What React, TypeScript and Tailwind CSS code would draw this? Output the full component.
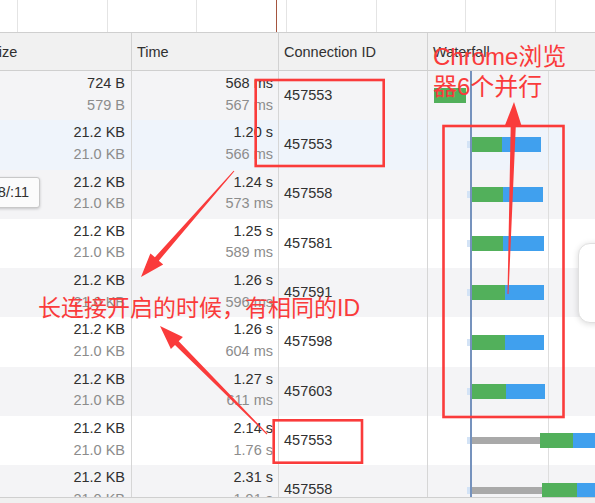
import React from "react";

type Bar = { ml: number; stub: boolean; gray: number; green: number; blue: number };
type Row = { s1: string; s2: string; t1: string; t2: string; id: string; bg: string; bar: Bar };

const rows: Row[] = [
  { s1: "724 B", s2: "579 B", t1: "568 ms", t2: "567 ms", id: "457553", bg: "bg-[#f4f4f6]", bar: { ml: 6, stub: false, gray: 0, green: 32, blue: 0 } },
  { s1: "21.2 KB", s2: "21.0 KB", t1: "1.20 s", t2: "566 ms", id: "457553", bg: "bg-[#eff4fb]", bar: { ml: 39, stub: true, gray: 0, green: 32, blue: 39 } },
  { s1: "21.2 KB", s2: "21.0 KB", t1: "1.24 s", t2: "573 ms", id: "457558", bg: "bg-[#f4f4f6]", bar: { ml: 39, stub: true, gray: 0, green: 33, blue: 40 } },
  { s1: "21.2 KB", s2: "21.0 KB", t1: "1.25 s", t2: "589 ms", id: "457581", bg: "bg-white", bar: { ml: 39, stub: true, gray: 0, green: 33, blue: 41 } },
  { s1: "21.2 KB", s2: "21.0 KB", t1: "1.26 s", t2: "596 ms", id: "457591", bg: "bg-[#f4f4f6]", bar: { ml: 39, stub: true, gray: 0, green: 35, blue: 39 } },
  { s1: "21.2 KB", s2: "21.0 KB", t1: "1.26 s", t2: "604 ms", id: "457598", bg: "bg-white", bar: { ml: 39, stub: true, gray: 0, green: 35, blue: 39 } },
  { s1: "21.2 KB", s2: "21.0 KB", t1: "1.27 s", t2: "611 ms", id: "457603", bg: "bg-[#f4f4f6]", bar: { ml: 39, stub: true, gray: 0, green: 36, blue: 39 } },
  { s1: "21.2 KB", s2: "21.0 KB", t1: "2.14 s", t2: "1.76 s", id: "457553", bg: "bg-white", bar: { ml: 39, stub: true, gray: 70, green: 33, blue: 40 } },
  { s1: "21.2 KB", s2: "21.0 KB", t1: "2.31 s", t2: "1.91 s", id: "457558", bg: "bg-[#f4f4f6]", bar: { ml: 39, stub: true, gray: 72, green: 35, blue: 40 } },
];

const RED = "#fa3b3b";

function arrowPoints(tx: number, ty: number, hx: number, hy: number) {
  const dx = hx - tx;
  const dy = hy - ty;
  const L = Math.sqrt(dx * dx + dy * dy);
  const ux = dx / L;
  const uy = dy / L;
  const px = -uy;
  const py = ux;
  const headLen = 24;
  const headW = 8.5;
  const bx = hx - ux * headLen;
  const by = hy - uy * headLen;
  const pts: [number, number][] = [
    [tx + px * 0.5, ty + py * 0.5],
    [bx + px * 2.6, by + py * 2.6],
    [bx + px * headW, by + py * headW],
    [hx, hy],
    [bx - px * headW, by - py * headW],
    [bx - px * 2.6, by - py * 2.6],
    [tx - px * 0.5, ty - py * 0.5],
  ];
  return pts.map((p) => `${p[0].toFixed(1)},${p[1].toFixed(1)}`).join(" ");
}

function WaterfallBar({ bar }: { bar: Bar }) {
  return (
    <div className="flex items-center h-full" style={{ paddingLeft: bar.ml }}>
      {bar.stub && <div className="w-[3px] h-[7px] bg-[#d3e3f6] shrink-0" />}
      {bar.gray > 0 && <div className="h-[7px] bg-[#a9a9a9] shrink-0" style={{ width: bar.gray }} />}
      <div className="h-[15px] bg-[#52b05b] shrink-0" style={{ width: bar.green }} />
      {bar.blue > 0 && <div className="h-[15px] bg-[#40a0ee] shrink-0" style={{ width: bar.blue }} />}
    </div>
  );
}

export default function App() {
  return (
    <div className="relative w-[595px] h-[503px] overflow-hidden bg-white text-[14.5px] text-[#303030] font-['Liberation_Sans','Noto_Sans_CJK_SC',sans-serif]">
      {/* overview strip */}
      <div className="relative h-[33px] border-b border-[#cfcfcf] flex pl-[17px]">
        {[0, 1, 2, 3, 4, 5, 6].map((i) => (
          <div key={i} className="w-[89.67px] shrink-0 h-full border-l border-[#e4e4e4]" />
        ))}
        <div className="absolute left-[276px] top-0 h-[32px] w-px bg-[#a5553f]" />
      </div>

      {/* header */}
      <div className="grid grid-cols-[132px_147px_149px_167px] h-[38px] bg-[#f1f1f1] border-b border-[#cfcfcf]">
        <div className="flex items-center pt-[3px] border-r border-[#d2d2d2] overflow-hidden">
          <span className="ml-[-11px] whitespace-nowrap">Size</span>
        </div>
        <div className="flex items-center pt-[3px] border-r border-[#d2d2d2] pl-[5px]">Time</div>
        <div className="flex items-center pt-[3px] border-r border-[#d2d2d2] pl-[5px]">Connection ID</div>
        <div className="flex items-center pt-[3px] pl-[5px]">Waterfall</div>
      </div>

      {/* body */}
      <div className="h-[426px] overflow-hidden flex flex-col">
        {rows.map((r, i) => (
          <div key={i} className={`grid grid-cols-[132px_147px_149px_167px] h-[49.3px] shrink-0 ${r.bg}`}>
            <div className="border-r border-[#d6d6d6] pr-[6px] pt-[2px] text-right leading-[21.5px]">
              <div>{r.s1}</div>
              <div className="text-[#8c8c8c]">{r.s2}</div>
            </div>
            <div className="border-r border-[#d6d6d6] pr-[5px] pt-[2px] text-right leading-[21.5px]">
              <div>{r.t1}</div>
              <div className="text-[#8c8c8c]">{r.t2}</div>
            </div>
            <div className="border-r border-[#d6d6d6] pl-[5px] flex items-center">{r.id}</div>
            <div className="relative overflow-hidden">
              <div className="absolute left-[120px] top-0 bottom-0 w-px bg-[#dedede]" />
              <div className="relative h-full">
                <WaterfallBar bar={r.bar} />
              </div>
              <div className="absolute left-[42px] top-0 bottom-0 w-[1.5px] bg-[#7592bd]" />
            </div>
          </div>
        ))}
      </div>
      <div className="h-[6px] border-t border-[#cfcfcf] bg-[#f0f0f0]" />

      {/* tooltip */}
      <div className="absolute left-[-20px] top-[177px] h-[31px] w-[60px] bg-[#fbfbfb] border border-[#c8c8c8] rounded-[3px] shadow-[0_1px_3px_rgba(0,0,0,0.2)] flex items-center justify-end pr-[10px]">
        8/:11
      </div>

      {/* popup card at right */}
      <div className="absolute left-[578px] top-[243px] w-[40px] h-[80px] rounded-[12px] bg-white border border-[#e0e0e0] shadow-[0_1px_6px_rgba(0,0,0,0.15)]" />

      {/* annotations */}
      <svg className="absolute left-0 top-0 pointer-events-none" width="595" height="503" viewBox="0 0 595 503">
        <rect x="255.7" y="80" width="128" height="86" fill="none" stroke={RED} strokeWidth="2.6" />
        <rect x="443.5" y="126" width="120" height="291" fill="none" stroke={RED} strokeWidth="2.6" />
        <rect x="273.7" y="420.3" width="88.3" height="42.4" fill="none" stroke={RED} strokeWidth="2.6" />
        <polygon points={arrowPoints(234, 171, 141, 277)} fill={RED} />
        <polygon points={arrowPoints(267, 434, 160, 326)} fill={RED} />
        <polygon points={arrowPoints(508, 294, 514, 102)} fill={RED} />
      </svg>

      <div className="absolute left-[433px] top-[42px] text-[24px] leading-[30px] text-[#fa3b3b] whitespace-nowrap font-['Liberation_Sans','Noto_Sans_CJK_SC',sans-serif]">
        <div>Chrome浏览</div>
        <div>器6个并行</div>
      </div>
      <div className="absolute left-[38px] top-[293px] text-[23px] leading-[30px] text-[#fa3b3b] whitespace-nowrap font-['Liberation_Sans','Noto_Sans_CJK_SC',sans-serif]">
        长连接开启的时候，有相同的ID
      </div>
    </div>
  );
}
